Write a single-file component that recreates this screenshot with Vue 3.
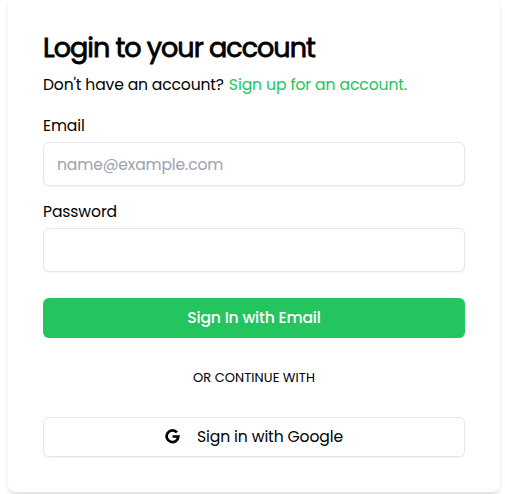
<script setup>
import { ref } from 'vue'

const email = ref('')
const password = ref('')
</script>

<template>
  <main class="page">
    <section class="card">
      <h1 class="title"><span>Login to your account</span></h1>
      <p class="subtitle">
        <span class="question">Don't have an account?</span>
        <a class="signup">Sign up for an account.</a>
      </p>
      <form class="form" @submit.prevent>
        <label class="label email-label" for="email"><span>Email</span></label>
        <input id="email" v-model="email" class="input" type="email" placeholder="name@example.com" />
        <label class="label password-label" for="password"><span>Password</span></label>
        <input id="password" v-model="password" class="input" type="password" />
        <button class="button primary" type="submit"><span>Sign In with Email</span></button>
      </form>
      <p class="divider"><span>OR CONTINUE WITH</span></p>
      <button class="button outline" type="button">
        <svg class="google" viewBox="0 0 16 16" fill="none" stroke="currentColor" stroke-width="2.9">
          <path d="M12.8 3.7A6.25 6.25 0 1 0 14.25 8H8.1" />
        </svg>
        <span>Sign in with Google</span>
      </button>
    </section>
  </main>
</template>

<style>
body {
  background: #fff;
}
</style>

<style scoped>
.page {
  display: flex;
  height: 494px;
  overflow: hidden;
  box-sizing: border-box;
  padding: 0 5px 2px 8px;
  color: #000;
  font-family: Poppins, Inter, sans-serif;
  font-feature-settings: "cv11" 1;
  font-size: 15.6px;
  letter-spacing: -0.12px;
}
.card {
  flex: 1;
  box-sizing: border-box;
  margin-top: -4px;
  padding: 36px 35px 0;
  border-radius: 8px;
  background: #fff;
  box-shadow: 0 4px 6px -1px rgb(0 0 0 / 0.1), 0 2px 4px -2px rgb(0 0 0 / 0.1);
}
.title {
  margin: 0;
  height: 32px;
  font-size: 27px;
  line-height: 32px;
  font-weight: 400;
  -webkit-text-stroke: 0.8px currentColor;
  letter-spacing: -0.98px;
  white-space: nowrap;
}
.subtitle {
  display: flex;
  gap: 5px;
  margin: 9px 0 0;
  line-height: 24px;
  white-space: nowrap;
}
.question {
  letter-spacing: -0.16px;
}
.signup {
  color: #22c55e;
  letter-spacing: -0.1px;
}
.form {
  display: flex;
  flex-direction: column;
}
.label {
  margin-top: 21px;
  height: 16px;
  line-height: 16px;
  margin-bottom: 8px;
}
.password-label {
  margin-top: 18px;
}
.input {
  box-sizing: border-box;
  width: 100%;
  height: 44px;
  padding: 0 13px;
  border: 1px solid #e5e7eb;
  border-radius: 6px;
  outline: none;
  background: #fff;
  box-shadow: 0 1px 2px rgb(0 0 0 / 0.05);
  color: inherit;
  font: inherit;
  font-feature-settings: inherit;
  letter-spacing: -0.15px;
}
.input::placeholder {
  color: #9ca3af;
}
.button {
  display: flex;
  align-items: center;
  justify-content: center;
  box-sizing: border-box;
  width: 100%;
  height: 40px;
  padding: 0 0 2px;
  border: 0;
  border-radius: 6px;
  color: #000;
  font: inherit;
  font-feature-settings: inherit;
  letter-spacing: -0.12px;
  box-shadow: 0 1px 2px rgb(0 0 0 / 0.05);
}
.primary {
  margin-top: 26px;
  background: #22c55e;
  color: #fff;
  font-weight: 500;
  letter-spacing: -0.18px;
}
.divider {
  margin: 32px 0 31px;
  font-size: 13px;
  line-height: 16px;
  letter-spacing: 0.05px;
  text-align: center;
}
.outline {
  gap: 17px;
  border: 1px solid #e5e7eb;
  background: #fff;
}
.google {
  width: 15px;
  height: 15px;
}
</style>
